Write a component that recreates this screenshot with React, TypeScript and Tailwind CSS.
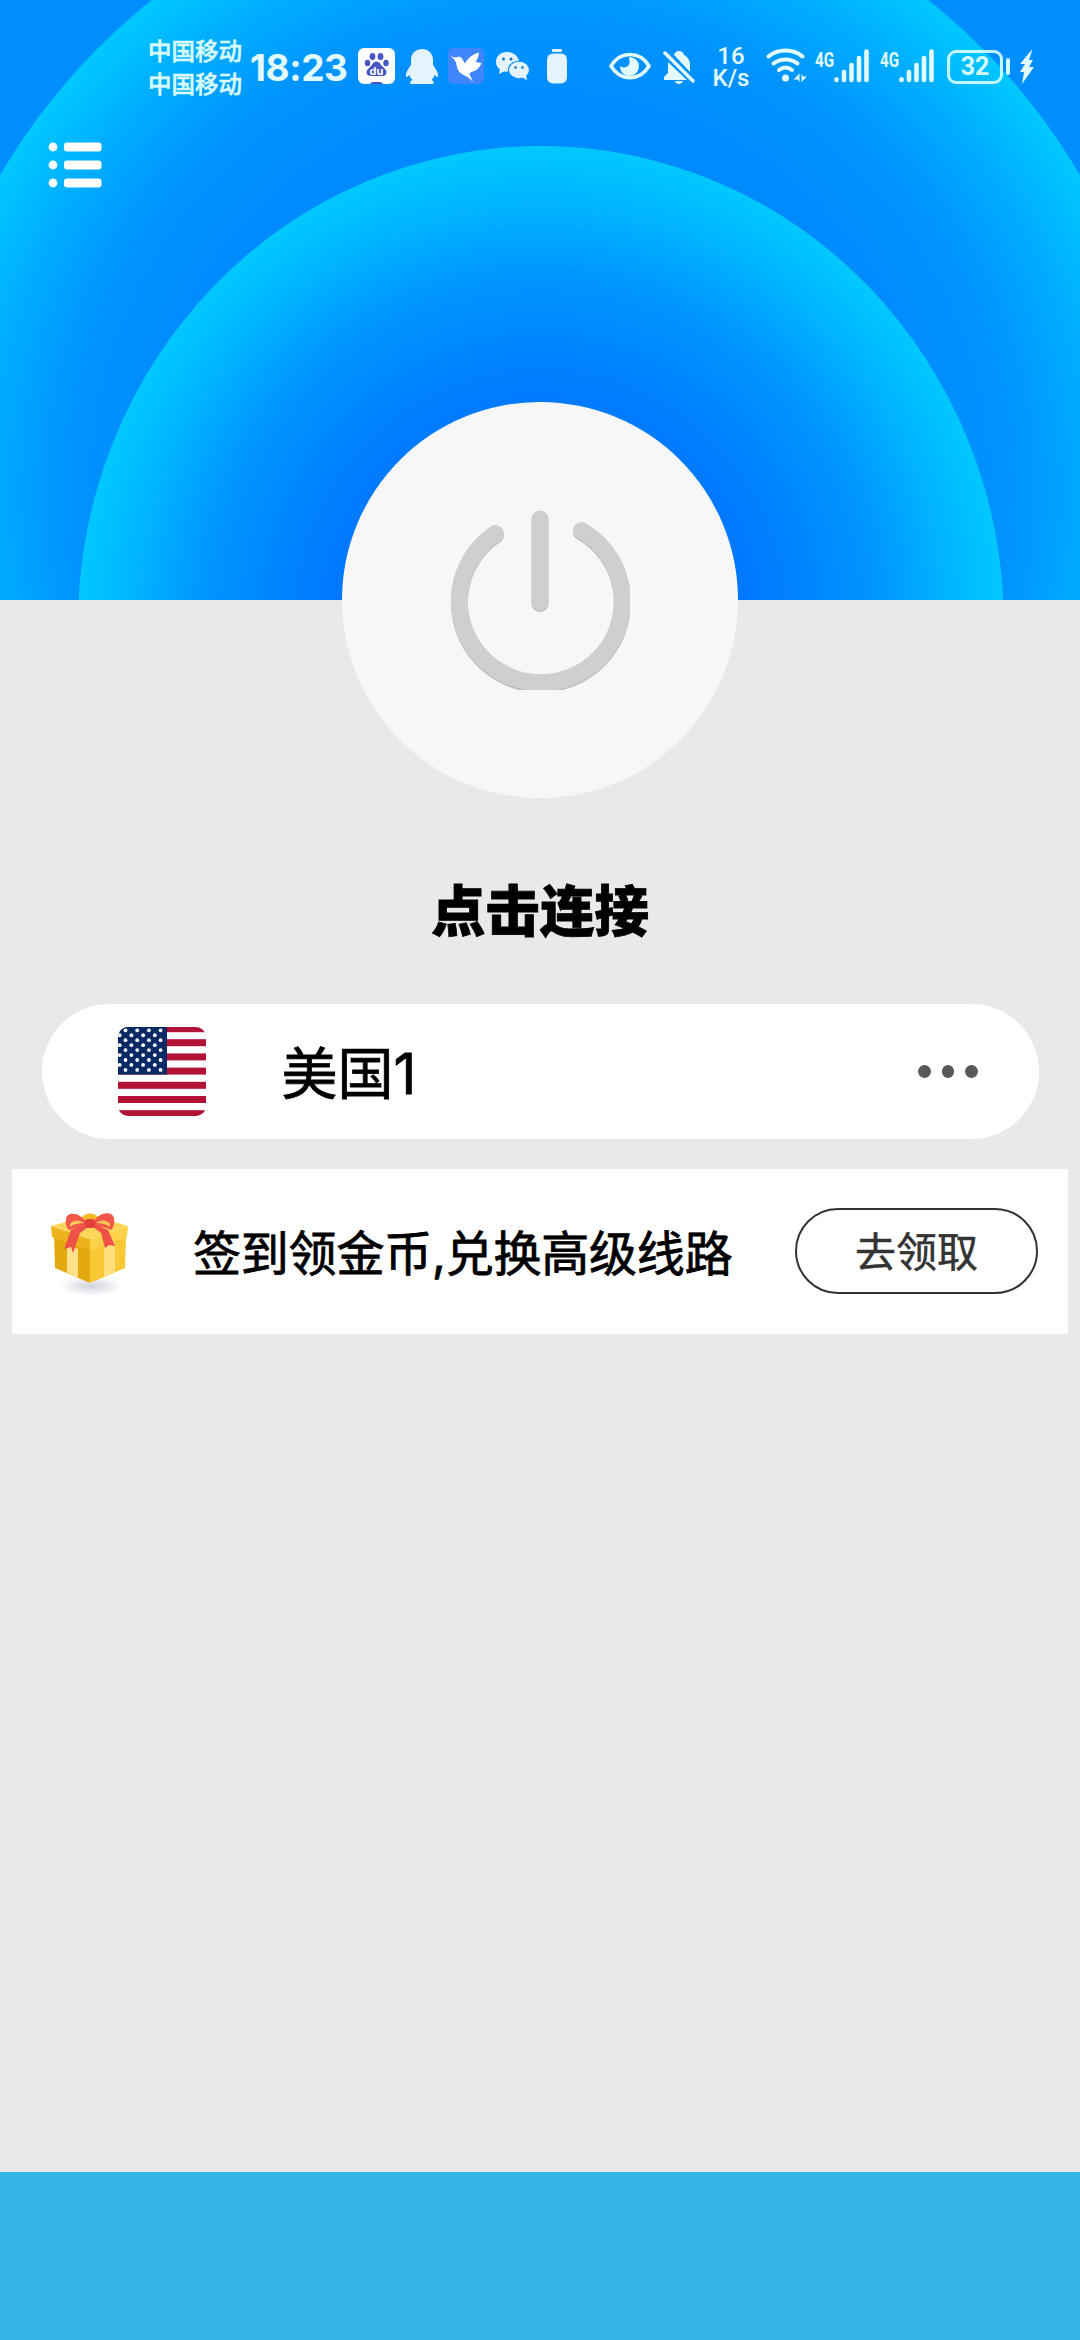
const dots = [0, 1, 2]

function Backdrop() {
  return (
    <svg className="absolute inset-0" width="1080" height="600" viewBox="0 0 1080 600">
      <defs>
        <radialGradient id="outer" cx="50%" cy="50%" r="50%">
          <stop offset="0.6" stopColor="#008aff" />
          <stop offset="0.76" stopColor="#0094ff" />
          <stop offset="0.9" stopColor="#00b0ff" />
          <stop offset="1" stopColor="#00c8ff" />
        </radialGradient>
        <radialGradient id="inner" cx="50%" cy="50%" r="50%">
          <stop offset="0.4" stopColor="#0074ff" />
          <stop offset="0.55" stopColor="#0082ff" />
          <stop offset="0.72" stopColor="#0094ff" />
          <stop offset="0.86" stopColor="#00b0ff" />
          <stop offset="1" stopColor="#00c8ff" />
        </radialGradient>
      </defs>
      <rect width="1080" height="600" fill="#008eff" />
      <circle cx="540" cy="490" r="625" fill="url(#outer)" />
      <ellipse cx="541" cy="625" rx="463" ry="479" fill="url(#inner)" />
    </svg>
  )
}

function DuIcon() {
  return (
    <svg width="37" height="36" viewBox="0 0 37 36">
      <rect width="37" height="36" rx="6" fill="#fff" />
      <g fill="#4656c4">
        <ellipse cx="9.5" cy="15" rx="2.7" ry="3.3" />
        <ellipse cx="14.5" cy="8.5" rx="2.9" ry="3.6" />
        <ellipse cx="22.5" cy="8.5" rx="2.9" ry="3.6" />
        <ellipse cx="28" cy="15" rx="2.7" ry="3.3" />
        <path d="M18.500 13.500c3 0 4 3 6 5s4 3 4 6-2.500 3.500-5 3.500h-10c-3 0-5-1-5-3.500s2-4 4-6 3-5 6-5z" />
        <path d="M12 36c1-2 3-2 6.500-2s5.500 0 6.500 2z" />
      </g>
      <text x="18.5" y="27" textAnchor="middle" fontSize="11" fontWeight="700" fill="#fff" fontFamily="Inter, sans-serif">du</text>
    </svg>
  )
}

function PenguinIcon() {
  return (
    <svg width="32" height="35" viewBox="0 0 32 35" fill="#e4f4ff">
      <path d="M16 0C9 0 5 5 5 11v5c-3 4-5.500 8-5 11 .3 2 2 .5 3.500-1 .5 2 1.500 3.500 3 5-2 1-2.500 2-2 4h23c.5-2 0-3-2-4 1.500-1.500 2.500-3 3-5 1.500 1.500 3.200 3 3.500 1 .5-3-2-7-5-11v-5C27 5 23 0 16 0z" />
    </svg>
  )
}

function BirdIcon() {
  return (
    <svg width="36" height="36" viewBox="0 0 36 36">
      <rect width="36" height="36" rx="5" fill="#3f86fb" />
      <path d="M2.500 8.500l5.500 1c2-1.500 4.500-1 6 1l3 5c3-5.500 7-9 14-11-.3 3.500-1.500 7-3.500 9.500l6 1c-2 5-5 8-10.500 9l-1.500 2 3.500 8c-3.500-4-7-6-10.500-7.500-4-2.500-5.500-5.500-6-9.500C8 13 6 10.500 2.500 8.500z" fill="#fff" />
    </svg>
  )
}

function ChatIcon() {
  return (
    <svg width="35" height="30" viewBox="0 0 35 30" fill="#e4f4ff">
      <path d="M12 1C5 1 1 5.500 1 11c0 3 1.500 5.500 4 7.500L4 23l5-2.500 4 .3c-1-7 5-11 11-11C23 5 18 1 12 1z" />
      <ellipse cx="24" cy="19" rx="10" ry="8.3" />
      <path d="M27 26l5 3.500-1-6z" />
      <g fill="#1474c8">
        <circle cx="8.5" cy="8" r="1.5" />
        <circle cx="16" cy="8" r="1.5" />
        <circle cx="20.5" cy="16.5" r="1.3" />
        <circle cx="27.5" cy="16.5" r="1.3" />
      </g>
    </svg>
  )
}

function WifiIcon() {
  return (
    <svg width="42" height="35" viewBox="0 0 42 35" fill="none" stroke="#e2fbff" strokeWidth="4" strokeLinecap="round">
      <path d="M2.500 8.500C12 .5 27 .5 36.500 8.500" />
      <path d="M7.500 15.500c7-5.500 17-5.500 24 0" />
      <path d="M13 22c4-3.200 9-3.200 13 0" />
      <circle cx="19.5" cy="30" r="3.5" fill="#e2fbff" stroke="none" />
      <path d="M33.500 25.500v8.500l-2-2.500h-4zM35.500 34v-8.500l1.500 3h4z" fill="#e2fbff" stroke="none" />
    </svg>
  )
}

function SignalIcon() {
  return (
    <div className="flex items-start">
      <div className="w-[19px]">
        <span className="inline-block origin-left scale-x-[0.76] font-['Roboto'] text-[20px] font-bold leading-[17px] text-[#e2fbff]">4G</span>
      </div>
      <svg width="36" height="34" viewBox="0 0 36 34" stroke="#e2fbff" strokeWidth="4.6" strokeLinecap="round">
        <path d="M2.500 30.200v.8M10 23v8M17.500 16v15M25 9v22M32.500 2.500v28.500" />
      </svg>
    </div>
  )
}

function StatusBar() {
  return (
    <div className="flex h-[134px] items-start pl-[148px]">
      <div className="flex w-24 flex-col pt-[34px] font-['Noto_Sans_CJK_SC'] text-[23.5px] font-medium leading-[33px] text-[#d8fbff] [-webkit-text-stroke:0.5px_#d8fbff]">
        <span className="whitespace-nowrap">中国移动</span>
        <span className="whitespace-nowrap">中国移动</span>
      </div>
      <span className="ml-[6px] mt-[43px] w-[100px] whitespace-nowrap font-['Inter'] text-[37px] font-bold leading-[50px] tracking-[-0.4px] text-[#e2fbff]">18:23</span>
      <div className="ml-2 mt-12 flex h-9 items-center gap-[10.5px]">
        <DuIcon />
        <PenguinIcon />
        <BirdIcon />
        <ChatIcon />
        <svg className="ml-[7px]" width="20" height="35" viewBox="0 0 20 35" fill="#e4f4ff">
          <rect x="5" y="0" width="10" height="3" rx="1" />
          <rect x="0" y="4.5" width="20" height="30" rx="6" />
        </svg>
      </div>
      <svg className="ml-[42px] mt-[52px]" width="42" height="28" viewBox="0 0 42 28">
        <path d="M2 14C11-1.500 31-1.500 40 14 31 29.500 11 29.500 2 14z" fill="none" stroke="#e2fbff" strokeWidth="3.5" />
        <path d="M20 5a9.500 9.500 0 1 1-9 9c4 3 9 1 9.500-3 .3-2-.5-4-.5-6z" fill="#e2fbff" />
      </svg>
      <svg className="ml-3 mt-[50px]" width="32" height="34" viewBox="0 0 32 34" fill="#e2fbff">
        <path d="M11 5C12-.5 20-.5 21 5c4 2 6 6 6 10v7zM5 12l19 18H1v-3l4-4zM12 31h8c-1 4-7 4-8 0z" />
        <path d="M2 3l28 28" stroke="#e2fbff" strokeWidth="3.5" strokeLinecap="round" />
      </svg>
      <div className="ml-[14px] mt-[45px] flex w-11 flex-col items-center font-['Roboto'] text-[24px] font-medium leading-[22px] text-[#e2fbff]">
        <span>16</span>
        <span>K/s</span>
      </div>
      <div className="ml-[13px] mt-12">
        <WifiIcon />
      </div>
      <div className="ml-[7px] mt-[49px] flex gap-[10px]">
        <SignalIcon />
        <SignalIcon />
      </div>
      <div className="ml-3 mt-[49px] flex items-center">
        <div className="flex h-[34px] w-[56px] items-center justify-center rounded-[9px] border-[3px] border-[#c4f8ff] font-['Roboto'] text-[25px] font-bold text-[#d4faff]">32</div>
        <div className="ml-[3px] h-[17px] w-[4px] rounded-full bg-[#d4faff]" />
        <svg className="ml-[9px]" width="15" height="35" viewBox="0 0 15 35" fill="#e2fbff">
          <path d="M13.500 0L1 15h5l-5 8h4L3 35 15 18h-5l4-7h-4z" />
        </svg>
      </div>
    </div>
  )
}

function MenuIcon() {
  return (
    <svg className="ml-12 mt-2" width="54" height="48" viewBox="0 0 54 48" fill="#fff">
      <circle cx="5" cy="5" r="4.4" />
      <circle cx="5" cy="23" r="4.4" />
      <circle cx="5" cy="41" r="4.4" />
      <rect x="16" y=".5" width="37.5" height="9" rx="3" />
      <rect x="16" y="18.5" width="37.5" height="9" rx="3" />
      <rect x="16" y="36.5" width="37.5" height="9" rx="3" />
    </svg>
  )
}

function PowerIcon() {
  const ring = "M45.500 23.500A81.500 81.500 0 1 0 131.500 20.500"
  return (
    <svg width="180" height="180" viewBox="0 0 180 180" fill="none" strokeWidth="17" strokeLinecap="round">
      <g stroke="#bdbdbd" transform="translate(0 1.5)">
        <path d={ring} />
        <path d="M90 9v83" />
      </g>
      <g stroke="#cfcfcf">
        <path d={ring} />
        <path d="M90 9v83" />
      </g>
    </svg>
  )
}

function UsFlag() {
  const rows = [0, 1, 2, 3, 4, 5, 6, 7, 8]
  return (
    <svg width="88" height="89" viewBox="0 0 88 89">
      <clipPath id="flag">
        <rect width="88" height="89" rx="10" />
      </clipPath>
      <g clipPath="url(#flag)">
        <rect width="88" height="89" fill="#fff" />
        {[-1.8, 12.2, 26.4, 40.6, 54.8, 69, 83.2].map((y) => (
          <rect key={y} y={y} width="88" height="7" fill="#b31237" />
        ))}
        <rect width="49" height="47.5" fill="#0a2a66" />
        {rows.map((row) =>
          [0, 1, 2, 3, 4].map((col) => {
            const x = (row % 2 === 0 ? 7.5 : 1.7) + col * 11.7
            return x < 47 ? <circle key={`${row}-${col}`} cx={x} cy={3.3 + row * 4.95} r="1.9" fill="#fff" /> : null
          }),
        )}
      </g>
    </svg>
  )
}

function GiftIcon() {
  return (
    <svg className="mt-1" width="84" height="90" viewBox="0 0 84 90">
      <defs>
        <radialGradient id="shade">
          <stop offset="0" stopColor="#cfd3dc" />
          <stop offset="1" stopColor="#fff" />
        </radialGradient>
      </defs>
      <ellipse cx="42" cy="77" rx="32" ry="10" fill="url(#shade)" />
      <path d="M5 27L41 37v37L6 59z" fill="#e3a90f" />
      <path d="M41 37l36-10-1 32-35 15z" fill="#f9c935" />
      <path d="M18 36l11 4v29l-11-5z" fill="#fbe18a" />
      <path d="M55 36l11-4v31l-11 5z" fill="#fde07c" />
      <path d="M2 17l39 13v11L3 28z" fill="#eeb41c" />
      <path d="M41 30l38-13-1 11-37 13z" fill="#fbd24a" />
      <path d="M2 17L42 6l37 11-38 13z" fill="#fbd65a" />
      <path d="M32 9c4-6 14-6 18 0l-4 8H36z" fill="#f5bb28" />
      <path d="M36 15L22 21 15 40l7-2 2 6 7-20 8-6zM46 15l13 6 7 16-6-1-4 3-4-15-8-6z" fill="#ee5145" />
      <path d="M38 14C30 2 18 3 17 10c-1 6 1 9 3 11 5-1 9-4 18-4zM44 14C51 1 64 3 65 9c1 6-1 10-3 12-4-2-9-4-18-4z" fill="#f0564a" />
      <path d="M21 15c4-5 10-4 14-1-5 0-10 1-14 4zM61 15c-4-5-10-4-14-1 5 0 10 1 14 4z" fill="#f8c958" />
      <rect x="36" y="10" width="10" height="9" rx="3" fill="#e2423a" />
    </svg>
  )
}

export default function App() {
  return (
    <div className="flex h-[2340px] w-[1080px] flex-col overflow-hidden bg-[#e9e9e9] font-['Inter','Noto_Sans_CJK_SC',sans-serif]">
      <header className="relative h-[600px] shrink-0">
        <Backdrop />
        <div className="relative">
          <StatusBar />
          <MenuIcon />
        </div>
      </header>

      <main className="relative -mt-[198px] flex flex-1 flex-col items-center">
        <button className="flex h-[396px] w-[396px] items-center justify-center rounded-full bg-[#f7f7f7]">
          <PowerIcon />
        </button>

        <h1 className="mt-[70px] font-['Noto_Sans_CJK_SC'] text-[54.5px] font-black leading-[80px] text-black [-webkit-text-stroke:0.8px_black]">点击连接</h1>

        {/* Selected line */}
        <div className="mt-14 flex h-[135px] w-[997px] items-center rounded-full bg-white pl-[76px] pr-[61px]">
          <UsFlag />
          <span className="ml-[76px] mt-[5px] text-[56px] leading-[80px] text-black [-webkit-text-stroke:0.8px_black]">美国1</span>
          <div className="ml-auto flex gap-[11px]">
            {dots.map((dot) => (
              <div key={dot} className="h-[12.5px] w-[12.5px] rounded-full bg-[#595959]" />
            ))}
          </div>
        </div>

        {/* Daily check-in */}
        <div className="mt-[30px] flex h-[165px] w-[1056px] items-center bg-white pl-[37px] pr-[30px]">
          <GiftIcon />
          <span className="ml-[60px] mt-1 whitespace-nowrap text-[48px] leading-[70px] tracking-[-0.2px] text-black [-webkit-text-stroke:0.8px_black]">签到领金币,兑换高级线路</span>
          <button className="mb-px ml-auto flex h-[86px] w-[243px] items-center justify-center rounded-full border-2 border-[#333] pt-[3px] text-[41px] text-[#333] [-webkit-text-stroke:0.5px_#333]">
            去领取
          </button>
        </div>
      </main>

      <footer className="h-[168px] shrink-0 bg-[#36b4e8]" />
    </div>
  )
}
